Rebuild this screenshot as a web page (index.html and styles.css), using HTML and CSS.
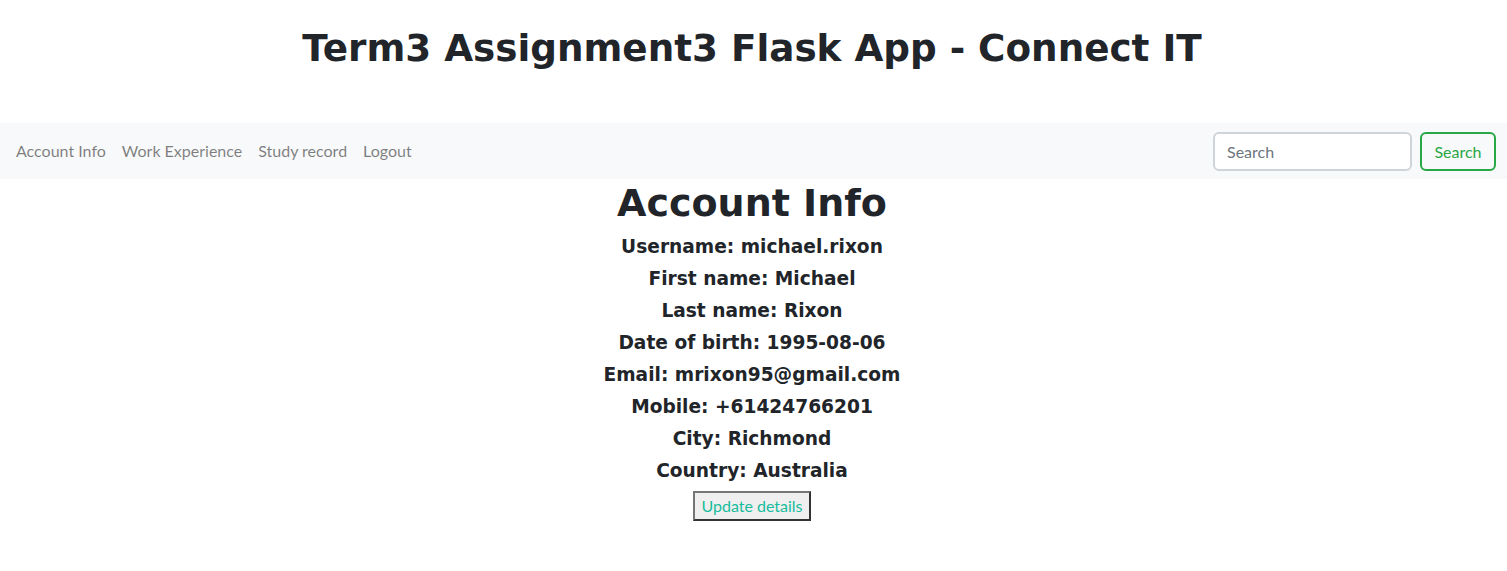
FILE: index.html
```html
<!DOCTYPE html>
<html lang="en">
<head>
<meta charset="utf-8">
<title>Connect IT</title>
<link rel="stylesheet" href="styles.css">
</head>
<body>
<header class="site-header">
  <h1 class="site-title">Term3 Assignment3 Flask App - Connect IT</h1>
</header>
<nav class="navbar">
  <ul class="nav-links">
    <li><a class="nav-link" href="#">Account Info</a></li>
    <li><a class="nav-link" href="#">Work Experience</a></li>
    <li><a class="nav-link" href="#">Study record</a></li>
    <li><a class="nav-link" href="#">Logout</a></li>
  </ul>
  <form class="search-form">
    <input class="search-input" type="search" placeholder="Search">
    <button class="search-btn" type="button">Search</button>
  </form>
</nav>
<main class="account">
  <h1 class="account-title">Account Info</h1>
  <h5 class="field">Username: michael.rixon</h5>
  <h5 class="field">First name: Michael</h5>
  <h5 class="field">Last name: Rixon</h5>
  <h5 class="field">Date of birth: 1995-08-06</h5>
  <h5 class="field">Email: mrixon95@gmail.com</h5>
  <h5 class="field">Mobile: +61424766201</h5>
  <h5 class="field">City: Richmond</h5>
  <h5 class="field">Country: Australia</h5>
  <button class="update-btn" type="button">Update details</button>
</main>
</body>
</html>
```
FILE: styles.css
```css
* { box-sizing: border-box; }
body {
  margin: 0;
  font-family: Lato, "Liberation Sans", sans-serif;
  font-size: 16px;
  color: #212529;
  background: #fff;
}
.site-header {
  padding: 24px 3px 51px 0;
  text-align: center;
}
.site-title {
  margin: 0;
  font-family: "DejaVu Sans", sans-serif;
  font-weight: 700;
  font-size: 37.3px;
  line-height: 48px;
  color: #212529;
}
.navbar {
  display: flex;
  align-items: center;
  justify-content: space-between;
  background: #f8f9fa;
  padding: 8px 11px 8px 8px;
  height: 56px;
}
.nav-links {
  display: flex;
  list-style: none;
  margin: 0;
  padding: 0;
}
.nav-link {
  display: block;
  padding: 8px;
  color: rgba(0,0,0,.5);
  text-decoration: none;
  font-size: 16px;
  line-height: 24px;
}
.search-form {
  display: flex;
  gap: 8px;
}
.search-input {
  width: 199px;
  height: 39px;
  padding: 6px 12px;
  font-family: Lato, sans-serif;
  font-size: 16px;
  color: #495057;
  border: 2px solid #ced4da;
  border-radius: 6px;
  background: #fff;
}
.search-input::placeholder { color: #6c757d; }
.search-btn {
  width: 76px;
  height: 39px;
  padding: 6px 0;
  font-family: Lato, sans-serif;
  font-size: 16px;
  color: #28a745;
  background: transparent;
  border: 2px solid #28a745;
  border-radius: 6px;
}
.account {
  display: flex;
  flex-direction: column;
  align-items: center;
  text-align: center;
  padding-right: 3px;
}
.account-title {
  margin: 0 0 8px;
  font-family: "DejaVu Sans", sans-serif;
  font-weight: 700;
  font-size: 38px;
  line-height: 48px;
}
.field {
  margin: 0 0 8px;
  font-family: "DejaVu Sans", sans-serif;
  font-weight: 700;
  font-size: 18.6px;
  line-height: 24px;
}
.update-btn {
  height: 30px;
  padding: 0 6px 1px;
  font-family: Lato, sans-serif;
  font-size: 16px;
  color: #18bc9c;
  background: #efefef;
  border: 2px solid;
  border-color: #767676 #333 #333 #767676;
}
```
